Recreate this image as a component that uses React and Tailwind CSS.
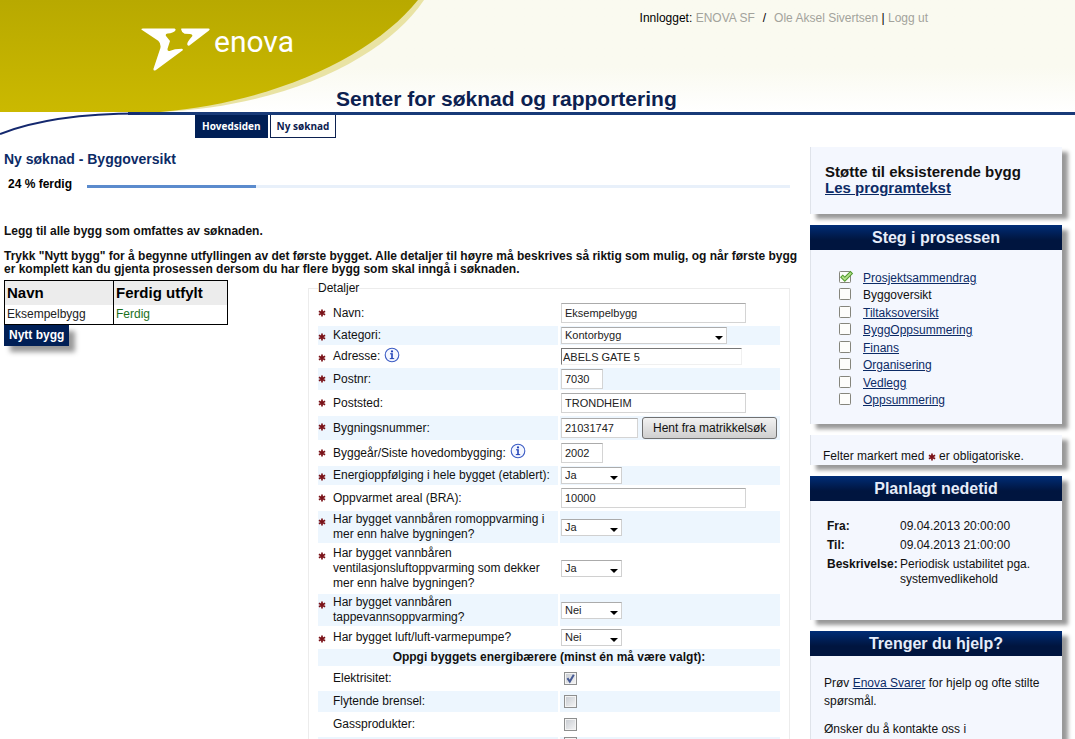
import React, { useState } from "react";

const steps = [
  { label: "Prosjektsammendrag", done: true },
  { label: "Byggoversikt", current: true },
  { label: "Tiltaksoversikt" },
  { label: "ByggOppsummering" },
  { label: "Finans" },
  { label: "Organisering" },
  { label: "Vedlegg" },
  { label: "Oppsummering" },
];

const progress = 24;

function Required() {
  return (
    <svg viewBox="0 0 8 8" className="inline-block size-2 shrink-0 align-middle" aria-hidden="true">
      <path d="M4 0.6V7.4M0.9 2.2L7.1 5.8M7.1 2.2L0.9 5.8" stroke="#7a1218" strokeWidth="1.7" />
    </svg>
  );
}

function InfoIcon() {
  return (
    <svg viewBox="0 0 16 16" className="-mt-1 ml-1 size-4 shrink-0" aria-hidden="true">
      <circle cx="8" cy="8" r="6.8" fill="#f4f7ff" stroke="#3c5cc4" strokeWidth="1.1" />
      <circle cx="8" cy="4.4" r="1.1" fill="#2444b8" />
      <path d="M6 6.8H8.6M5.8 11.6H10.2" fill="none" stroke="#2444b8" strokeWidth="1" />
      <path d="M8 6.4V12" stroke="#2444b8" strokeWidth="1.6" />
    </svg>
  );
}

function StepIcon({ done }) {
  return (
    <svg viewBox="0 0 15 14" className="h-3.5 w-[15px] shrink-0" aria-hidden="true">
      <rect x="0.5" y="1.5" width="11" height="11" rx="0.8" fill="#fdfdfb" stroke="#85857c" />
      {done && (
        <>
          <path d="M2.4 5.8L5.8 9.2L12.8 2.2" fill="none" stroke="#4f9a2c" strokeWidth="3.8" />
          <path d="M3.1 6.5L5.8 9.2L12.1 2.9" fill="none" stroke="#b4e08c" strokeWidth="1.8" />
        </>
      )}
    </svg>
  );
}

function Logo() {
  return (
    <a href="#" className="flex items-start text-white" aria-label="enova">
      <svg viewBox="0 0 69 43" className="h-[43px] w-[69px]" aria-hidden="true">
        <path
          fill="currentColor"
          d="M0.3 1.4Q0.4 0.4 2 0.4H33.5Q35.4 0.8 34 3Q32.6 4.8 26.6 5.6Q24 6.2 25 8L29 13L26.6 20.6Q26 23.6 28.6 22.9L34 21.2L41 20.8Q42.6 21.4 41.4 22.6L15 42Q12.4 43.4 12.4 41L19.4 20Q20.2 15.6 17.2 12.8Z"
        />
        <path
          fill="currentColor"
          d="M40.4 0.4H67.4Q69.6 0.8 68 2.4L48.4 17.4Q46.6 18.2 46.2 16.2Q46.2 14 51 8.6Q52.4 6.4 49 6L43.6 5.8Q39.2 3 40.4 0.4Z"
        />
      </svg>
      <span className="pl-1 font-[Roboto,sans-serif] text-[30px] leading-[28px]">enova</span>
    </a>
  );
}

function Header() {
  return (
    <header className="relative">
      <div className="flex h-28 bg-linear-to-b from-[#fafaf0] from-60% to-white">
        <svg viewBox="0 0 430 136" className="absolute top-0 left-0 h-[136px] w-[430px]" aria-hidden="true">
          <defs>
            <linearGradient id="gold" x1="0" y1="0" x2="0" y2="1">
              <stop offset="0" stopColor="#b8a900" />
              <stop offset="1" stopColor="#cbb900" />
            </linearGradient>
          </defs>
          <path d="M0 0H424C387 55 292 106 160 112H0Z" fill="#e9e3a4" />
          <path d="M0 0H418C374 55 277 102 160 112H0Z" fill="url(#gold)" />
          <path d="M0 134C38 119 84 113.5 140 113.5" fill="none" stroke="#14286e" strokeWidth="2" />
        </svg>
        <div className="relative w-[336px] shrink-0 pt-7 pl-[141px]">
          <Logo />
        </div>
        <div className="relative flex flex-1 flex-col justify-between">
          <p className="flex justify-end pt-2.5 pr-[147px] text-xs text-black">
            <span>
              Innlogget: <a href="#" className="text-[#a3a39c]">ENOVA SF</a>
            </span>
            <span className="px-2">/</span>
            <span>
              <a href="#" className="text-[#a3a39c]">Ole Aksel Sivertsen</a> |{" "}
              <a href="#" className="text-[#a3a39c]">Logg ut</a>
            </span>
          </p>
          <h1 className="text-[21px] leading-[26px] font-bold text-[#0c2150]">
            Senter for søknad og rapportering
          </h1>
        </div>
      </div>
      <div className="ml-32 h-[3px] bg-[#183a78]" />
      <nav className="relative flex gap-0.5 pl-[195px] font-['Open_Sans',sans-serif] text-[10px] font-bold">
        <a href="#" className="border border-t-0 border-[#001f56] bg-[#001f56] px-1.5 leading-[22px] text-white">
          Hovedsiden
        </a>
        <a href="#" className="border border-t-0 border-[#0c2150] bg-white px-1.5 leading-[22px] text-[#0c2150]">
          Ny søknad
        </a>
      </nav>
    </header>
  );
}

function TextField({ id, defaultValue, className }) {
  return (
    <input
      id={id}
      type="text"
      defaultValue={defaultValue}
      className={`h-5 border border-[#d4d4d4] border-t-[#ababab] bg-white px-[3px] text-[11px] text-[#222] ${className}`}
    />
  );
}

function SelectField({ id, value, options, className }) {
  return (
    <div className={`relative ${className}`}>
      <select
        id={id}
        defaultValue={value}
        className="block h-[17px] w-full appearance-none border border-[#d0d0d0] border-t-[#ababab] bg-white pr-4 pl-[3px] text-[11px] leading-[15px] text-[#222]"
      >
        {options.map((o) => (
          <option key={o}>{o}</option>
        ))}
      </select>
      <svg viewBox="0 0 8 4" className="pointer-events-none absolute right-1 bottom-1 h-1 w-2" aria-hidden="true">
        <path d="M0 0H8L4 4Z" fill="#000" />
      </svg>
    </div>
  );
}

function Row({ id, label, info, shaded, children }) {
  const bg = shaded ? "bg-[#edf6fe]" : "";
  return (
    <div className="flex gap-0.5">
      <div className={`flex w-[240px] shrink-0 items-center py-px ${bg}`}>
        <span className="flex w-[15px] shrink-0 self-start pt-1.5">
          <Required />
        </span>
        <label htmlFor={id} className="leading-[15px]">{label}</label>
        {info && <InfoIcon />}
      </div>
      <div className={`flex flex-1 items-center gap-1 py-px pl-px ${bg}`}>{children}</div>
    </div>
  );
}

function CheckRow({ id, label, shaded, initial }) {
  const [checked, setChecked] = useState(initial || false);
  const bg = shaded ? "bg-[#edf6fe]" : "";
  return (
    <div className="flex gap-0.5">
      <div className={`w-[240px] shrink-0 py-[3px] pl-[15px] ${bg}`}>
        <label htmlFor={id} className="block leading-[15px]">{label}</label>
      </div>
      <div className={`flex flex-1 items-center pl-1 ${bg}`}>
        <span className="relative flex">
          <input
            id={id}
            type="checkbox"
            aria-label={label ? undefined : "Energibærer"}
            checked={checked}
            onChange={(e) => setChecked(e.target.checked)}
            className="size-[13px] appearance-none border border-[#8e8f8f] bg-linear-to-br from-[#c6cad0] to-[#f6f6f6] shadow-[inset_0_0_0_1px_#f4f4f4]"
          />
          {checked && (
            <svg viewBox="0 0 13 13" className="pointer-events-none absolute inset-0 size-[13px]" aria-hidden="true">
              <path d="M3.4 6.2L5.8 9.6L9.8 2.8" fill="none" stroke="#465a94" strokeWidth="2" />
            </svg>
          )}
        </span>
      </div>
    </div>
  );
}

function DetailsForm() {
  return (
    <fieldset className="mt-px min-w-0 flex-1 border border-[#ececec] px-[9px] text-xs text-[#111]">
      <legend className="leading-[15px]">Detaljer</legend>
      <div className="flex flex-col gap-0.5 pt-1.5">
        <Row id="navn" label="Navn:">
          <TextField id="navn" defaultValue="Eksempelbygg" className="w-[185px]" />
        </Row>
        <Row id="kategori" label="Kategori:" shaded>
          <SelectField id="kategori" value="Kontorbygg" options={["Kontorbygg"]} className="w-[166px]" />
        </Row>
        <Row id="adresse" label="Adresse:" info>
          <input
            id="adresse"
            type="text"
            defaultValue="ABELS GATE 5"
            className="h-[17px] w-[181px] border border-[#f0f0f0] border-t-[#777] border-l-[#777] px-px text-[11px] text-[#222]"
          />
        </Row>
        <Row id="postnr" label="Postnr:" shaded>
          <TextField id="postnr" defaultValue="7030" className="w-[42px]" />
        </Row>
        <Row id="poststed" label="Poststed:">
          <TextField id="poststed" defaultValue="TRONDHEIM" className="w-[185px]" />
        </Row>
        <Row id="bygningsnummer" label="Bygningsnummer:" shaded>
          <TextField id="bygningsnummer" defaultValue="21031747" className="w-[77px]" />
          <button
            type="button"
            className="h-[22px] rounded-[3px] border border-[#707070] bg-linear-to-b from-[#f2f2f2] to-[#cfcfcf] px-2.5 text-xs whitespace-nowrap"
          >
            Hent fra matrikkelsøk
          </button>
        </Row>
        <Row id="byggear" label="Byggeår/Siste hovedombygging:" info>
          <TextField id="byggear" defaultValue="2002" className="w-[42px]" />
        </Row>
        <Row id="energi" label="Energioppfølging i hele bygget (etablert):" shaded>
          <SelectField id="energi" value="Ja" options={["Ja", "Nei"]} className="w-[61px]" />
        </Row>
        <Row id="areal" label="Oppvarmet areal (BRA):">
          <TextField id="areal" defaultValue="10000" className="w-[185px]" />
        </Row>
        <Row id="romoppvarming" label="Har bygget vannbåren romoppvarming i mer enn halve bygningen?" shaded>
          <SelectField id="romoppvarming" value="Ja" options={["Ja", "Nei"]} className="w-[61px]" />
        </Row>
        <Row
          id="ventilasjon"
          label="Har bygget vannbåren ventilasjonsluftoppvarming som dekker mer enn halve bygningen?"
        >
          <SelectField id="ventilasjon" value="Ja" options={["Ja", "Nei"]} className="w-[61px]" />
        </Row>
        <Row id="tappevann" label="Har bygget vannbåren tappevannsoppvarming?" shaded>
          <SelectField id="tappevann" value="Nei" options={["Ja", "Nei"]} className="w-[61px]" />
        </Row>
        <Row id="varmepumpe" label="Har bygget luft/luft-varmepumpe?">
          <SelectField id="varmepumpe" value="Nei" options={["Ja", "Nei"]} className="w-[61px]" />
        </Row>
        <p className="bg-[#edf6fe] py-px text-center leading-[15px] font-bold">
          Oppgi byggets energibærere (minst én må være valgt):
        </p>
        <CheckRow id="elektrisitet" label="Elektrisitet:" initial />
        <CheckRow id="flytende" label="Flytende brensel:" shaded />
        <CheckRow id="gass" label="Gassprodukter:" />
        <CheckRow id="annen" shaded />
      </div>
    </fieldset>
  );
}

function Panel({ title, children }) {
  return (
    <section className="border-l border-[#dfe3ea] bg-[#f4f7fe] shadow-[6px_5px_4px_#999]">
      {title && (
        <h2 className="-ml-px bg-linear-to-b from-[#002d77] to-[#00153f] to-60% text-center text-base leading-[25px] font-bold text-[#e6edfa]">
          {title}
        </h2>
      )}
      {children}
    </section>
  );
}

function Sidebar() {
  return (
    <aside className="flex w-[252px] shrink-0 flex-col gap-[11px] text-xs text-[#111]">
      <Panel>
        <div className="pt-[17px] pb-[18px] pl-3.5 text-[15px] leading-4 font-bold">
          <p>Støtte til eksisterende bygg</p>
          <a href="#" className="block text-[#0c2b66] underline">Les programtekst</a>
        </div>
      </Panel>
      <Panel title="Steg i prosessen">
        <ul className="pt-5 pb-3.5 pl-7">
          {steps.map((step) => (
            <li key={step.label} className="flex items-start gap-[9px] leading-[17px] even:mb-px">
              <StepIcon done={step.done} />
              {step.current ? (
                <span>{step.label}</span>
              ) : (
                <a href="#" className="text-[#0c2b66] underline">{step.label}</a>
              )}
            </li>
          ))}
        </ul>
      </Panel>
      <Panel>
        <p className="pt-3.5 pb-px pl-3 leading-[15px]">
          Felter markert med <Required /> er obligatoriske.
        </p>
      </Panel>
      <Panel title="Planlagt nedetid">
        <dl className="grid grid-cols-[73px_1fr] gap-y-1 pt-[18px] pr-2 pb-[33px] pl-4 leading-[15px]">
          <dt className="font-bold">Fra:</dt>
          <dd>09.04.2013 20:00:00</dd>
          <dt className="font-bold">Til:</dt>
          <dd>09.04.2013 21:00:00</dd>
          <dt className="font-bold">Beskrivelse:</dt>
          <dd>Periodisk ustabilitet pga. systemvedlikehold</dd>
        </dl>
      </Panel>
      <Panel title="Trenger du hjelp?">
        <div className="flex flex-col gap-2.5 pt-[18px] pr-2 pb-4 pl-[13px] leading-[18px]">
          <p>
            Prøv <a href="#" className="text-[#0c2b66] underline">Enova Svarer</a> for hjelp og ofte stilte
            spørsmål.
          </p>
          <p>Ønsker du å kontakte oss i</p>
        </div>
      </Panel>
    </aside>
  );
}

export default function App() {
  return (
    <div className="h-screen overflow-hidden bg-white font-['Liberation_Sans',Arial,sans-serif]">
      <Header />
      <div className="flex gap-5 pt-[9px] pr-[13px] pl-1">
        <main className="min-w-0 flex-1 pt-1">
          <h2 className="text-sm leading-4 font-bold text-[#0c2b66]">Ny søknad - Byggoversikt</h2>
          <div className="flex items-center pt-[9px] pl-1">
            <span className="w-[79px] text-xs font-bold">{progress} % ferdig</span>
            <div className="mt-1 h-[3px] flex-1 bg-[#e8f0fa]">
              <div className="h-full bg-[#5b8bcd]" style={{ width: `${progress}%` }} />
            </div>
          </div>
          <div className="-mr-3 pt-[33px] text-xs leading-[13px] font-bold text-[#111]">
            <p>Legg til alle bygg som omfattes av søknaden.</p>
            <p className="pt-3">
              Trykk "Nytt bygg" for å begynne utfyllingen av det første bygget. Alle detaljer til høyre må
              beskrives så riktig som mulig, og når første bygg er komplett kan du gjenta prosessen dersom du
              har flere bygg som skal inngå i søknaden.
            </p>
          </div>
          <div className="flex items-start pt-1">
            <div className="w-[304px] shrink-0">
              <table className="w-[224px] border border-black text-left">
                <thead>
                  <tr className="bg-[#ececec] text-[15px]">
                    <th className="w-[109px] border-r border-black px-0.5 leading-6">Navn</th>
                    <th className="px-0.5 leading-6">Ferdig utfylt</th>
                  </tr>
                </thead>
                <tbody>
                  <tr className="text-xs">
                    <td className="border-r border-black px-0.5 leading-[19px] text-[#222]">Eksempelbygg</td>
                    <td className="px-0.5 leading-[19px] text-[#1c701c]">Ferdig</td>
                  </tr>
                </tbody>
              </table>
              <button
                type="button"
                className="block bg-[#001f56] px-[5px] text-xs leading-[21px] font-bold text-white shadow-[6px_6px_5px_#999]"
              >
                Nytt bygg
              </button>
            </div>
            <DetailsForm />
          </div>
        </main>
        <Sidebar />
      </div>
    </div>
  );
}
